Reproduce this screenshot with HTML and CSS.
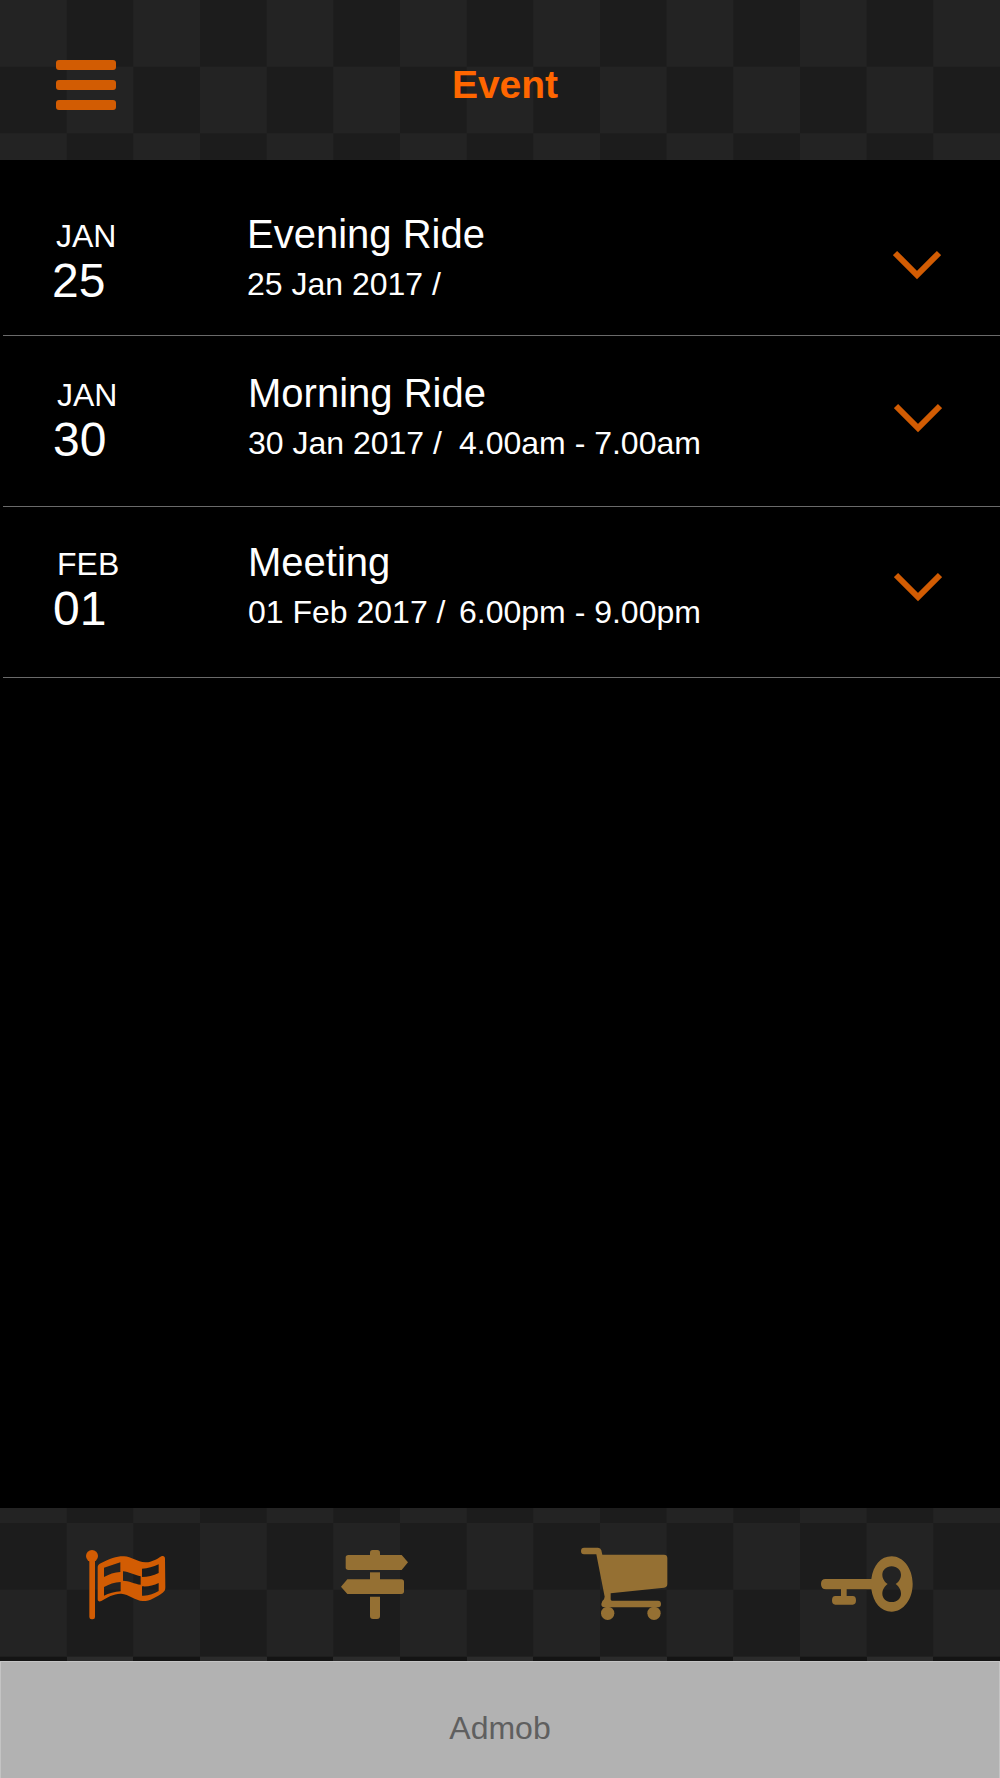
FILE: index.html
```html
<!DOCTYPE html>
<html lang="en">
<head>
  <meta charset="UTF-8" />
  <meta name="viewport" content="width=device-width, initial-scale=1.0"/>
  <title>Event</title>
  <link rel="stylesheet" href="styles.css">
</head>
<body>
  <div class="app">
    <header class="header">
      <div class="menu-btn">
        <span></span>
        <span></span>
        <span></span>
      </div>
      <h1 class="header-title">Event</h1>
    </header>

    <main class="event-list">
      <div class="event-row event-row-first">
        <div class="event-date">
          <div class="month">JAN</div>
          <div class="day">25</div>
        </div>
        <div class="event-info">
          <div class="event-name">Evening Ride</div>
          <div class="event-meta"><span class="meta-date">25 Jan 2017 /</span></div>
        </div>
        <svg class="chevron" viewBox="0 0 48 30"><path d="M2 3 24 25 46 3"/></svg>
      </div>

      <div class="event-row">
        <div class="event-date">
          <div class="month">JAN</div>
          <div class="day">30</div>
        </div>
        <div class="event-info">
          <div class="event-name">Morning Ride</div>
          <div class="event-meta"><span class="meta-date">30 Jan 2017 /</span><span>4.00am - 7.00am</span></div>
        </div>
        <svg class="chevron" viewBox="0 0 48 30"><path d="M2 3 24 25 46 3"/></svg>
      </div>

      <div class="event-row event-row-last">
        <div class="event-date">
          <div class="month">FEB</div>
          <div class="day">01</div>
        </div>
        <div class="event-info">
          <div class="event-name">Meeting</div>
          <div class="event-meta"><span class="meta-date">01 Feb 2017 /</span><span>6.00pm - 9.00pm</span></div>
        </div>
        <svg class="chevron" viewBox="0 0 48 30"><path d="M2 3 24 25 46 3"/></svg>
      </div>
    </main>

    <nav class="tabbar">
      <div class="tab">
        <svg class="tab-icon tab-active" viewBox="15 0 360 300">
          <circle cx="96" cy="78" r="18"/>
          <rect x="88" y="80" width="17" height="188" rx="7"/>
          <path fill-rule="evenodd" d="M113 112C113 106 116 103 122 100 150 86 172 78 192 79 214 80 232 96 256 97 274 98 290 88 304 79 310 76 315 79 315 86L316 172C316 180 314 184 308 188 288 202 268 214 248 213 226 212 206 192 184 191 162 190 142 202 124 213 118 216 113 214 113 208ZM132 113 181 97V126C164 127 146 133 132 141ZM189 124C206 125 224 136 242 139V164C224 162 206 152 189 152ZM246 116C263 116 280 110 296 103V129C280 137 263 141 246 141ZM132 171C146 163 164 157 182 156V184C164 184 146 191 132 197ZM246 169C263 171 280 166 296 159V183C282 191 263 199 246 197Z"/>
        </svg>
      </div>
      <div class="tab">
        <svg class="tab-icon" viewBox="-15 0 360 300">
          <rect x="150" y="60" width="30" height="24" rx="8"/>
          <path d="M85 75H245L264 97 245 120H85Q77 120 77 112V83Q77 75 85 75Z"/>
          <rect x="150" y="127" width="30" height="28"/>
          <path d="M82 148H244Q252 148 252 156V184Q252 192 244 192H82L63 170Z"/>
          <path d="M150 200H180V258Q180 267 171 267H159Q150 267 150 258Z"/>
        </svg>
      </div>
      <div class="tab">
        <svg class="tab-icon" viewBox="-15 0 360 300">
          <path d="M42 53H84Q92 53 94 61L97 74H282Q292 74 292 84V162Q292 172 282 173L122 190V208Q122 212 126 212H264Q273 212 273 222T264 232H103Q94 232 94 222Q94 214 102 208L104 200 79 73H42Q33 73 33 63T42 53Z"/>
          <circle cx="113" cy="250" r="20"/>
          <circle cx="252" cy="250" r="20"/>
        </svg>
      </div>
      <div class="tab">
        <svg class="tab-icon" viewBox="15 0 360 300">
          <path fill-rule="evenodd" d="M245 79C280 79 308 116 308 162 308 208 280 245 245 245 212 245 190 218 184 178H110V198H128Q138 198 138 211T128 224H76Q66 224 66 211T76 198H93V178H48Q33 178 33 162T48 147H184C190 106 212 79 245 79ZM245 109C229 109 217 120 217 134 217 147 225 156 233 162 225 168 217 178 217 191 217 205 229 216 245 216 261 216 273 205 273 191 273 178 265 168 257 162 265 156 273 147 273 134 273 120 261 109 245 109Z"/>
        </svg>
      </div>
    </nav>
    <div class="tab-strip"></div>

    <div class="ad-banner">Admob</div>
  </div>
</body>
</html>
```

FILE: styles.css
```css
:root {
  --orange: #d25c03;
  --title: #ff6600;
  --brown: #957033;
  --check-light: #232323;
  --check-dark: #1c1c1c;
}

* {
  box-sizing: border-box;
}

body {
  margin: 0;
  background: #000;
  color: #fff;
  font-family: "Liberation Sans", Arial, sans-serif;
}

.app {
  display: flex;
  flex-direction: column;
  height: 1778px;
}

/* header */
.header {
  display: flex;
  align-items: flex-start;
  height: 160px;
  padding: 60px 106px 0 56px;
  background: repeating-conic-gradient(var(--check-dark) 0 25%, var(--check-light) 0 50%) 0 0 / 133.33px 133.33px;
}

.menu-btn {
  display: flex;
  flex-direction: column;
  gap: 10px;
  width: 60px;
}

.menu-btn span {
  height: 10px;
  border-radius: 3px;
  background: var(--orange);
}

.header-title {
  flex: 1;
  margin: 0;
  color: var(--title);
  font-size: 39px;
  font-weight: bold;
  line-height: 50px;
  text-align: center;
}

/* event rows */
.event-list {
  flex: 1;
  padding: 17px 0 0 3px;
}

.event-row {
  display: flex;
  height: 171px;
  padding: 34px 0 0 52px;
  border-bottom: 1px solid #6a6a6a;
}

.event-row-first {
  height: 159px;
  padding-left: 51px;
}

.event-row-last {
  padding-top: 32px;
}

.event-date {
  width: 193px;
  padding-top: 7px;
}

.month {
  margin-left: 2px;
  font-size: 32px;
  line-height: 36px;
}

.day {
  margin: 1px 0 0 -2px;
  font-size: 48px;
  line-height: 52px;
}

.event-info {
  flex: 1;
}

.event-name {
  font-size: 40px;
  line-height: 46px;
}

.event-meta {
  display: flex;
  margin-top: 8px;
  font-size: 32px;
  line-height: 38px;
}

.meta-date {
  width: 211px;
}

.chevron {
  width: 48px;
  height: 30px;
  margin: 33px 58px 0 0;
  fill: none;
  stroke: var(--orange);
  stroke-width: 6;
}

.event-row-first .chevron {
  margin: 39px 59px 0 0;
}

/* bottom tabs */
.tabbar {
  display: flex;
  height: 149px;
  padding-top: 22px;
  background: repeating-conic-gradient(var(--check-dark) 0 25%, var(--check-light) 0 50%) 0 81.67px / 133.33px 133.33px;
}

.tab {
  flex: 1;
  display: flex;
  justify-content: center;
}

.tab-icon {
  width: 120px;
  height: 100px;
  fill: var(--brown);
}

.tab-active {
  fill: var(--orange);
}

.tab-strip {
  height: 4px;
  background: repeating-linear-gradient(90deg, #141414 0 66.67px, #2b2b2b 66.67px 133.33px);
}

.ad-banner {
  height: 117px;
  padding-top: 46px;
  background: #b2b2b2;
  border: 1px solid #c4c4c4;
  border-bottom: none;
  color: #5f5f5f;
  font-size: 32px;
  line-height: 40px;
  text-align: center;
}
```
